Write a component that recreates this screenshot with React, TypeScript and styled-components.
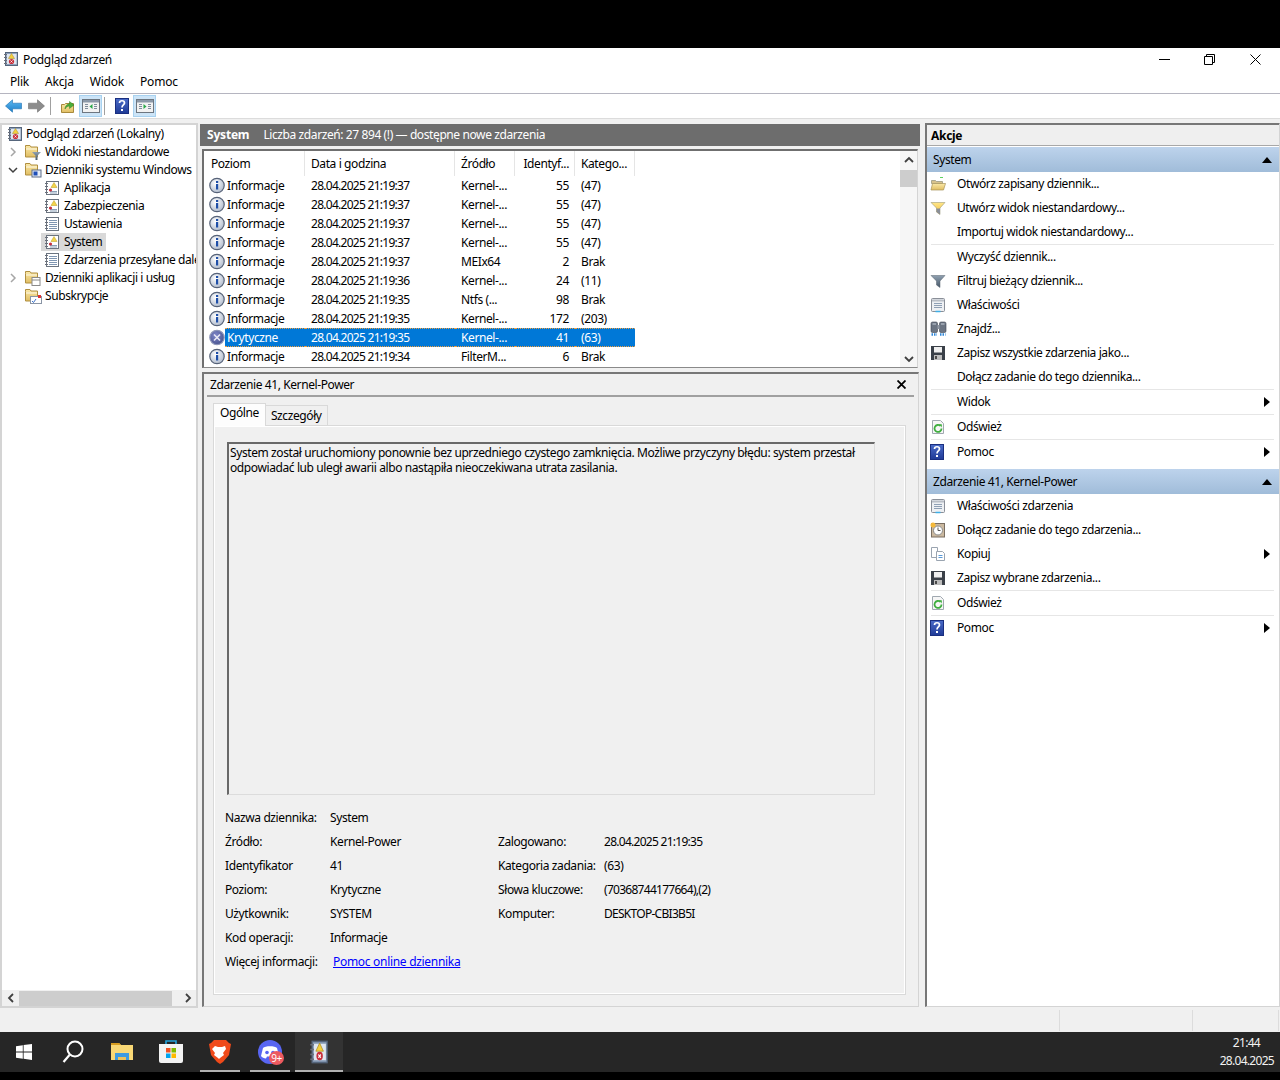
import React from "react";
import styled, { createGlobalStyle } from "styled-components";

const Global = createGlobalStyle`
  html, body { margin: 0; padding: 0; background: #000; }
  body { font-family: "Noto Sans", "Open Sans", "Liberation Sans", sans-serif; font-size: 12px; color: #000; }
  * { box-sizing: border-box; }
`;

const Screen = styled.div`
  width: 1280px; height: 1080px; background: #000; padding: 48px 0 8px;
  display: flex; flex-direction: column; overflow: hidden; letter-spacing: -0.4px;
`;
const TitleBar = styled.div`
  height: 24px; flex: none; background: #fff; display: flex; align-items: center; padding: 0 2px 2px 3px;
`;
const TitleText = styled.span` flex: 1; margin-left: 4px; letter-spacing: -0.35px; `;
const WinBtn = styled.div` width: 45.5px; height: 22px; display: flex; align-items: center; justify-content: center; `;
const MenuBar = styled.div`
  height: 22px; flex: none; background: #fff; border-bottom: 1px solid #b5b5c0; display: flex; align-items: center; padding: 0 0 2px 3px;
`;
const MenuItem = styled.span` padding: 0 7px; margin-right: 2px; letter-spacing: -0.2px; `;
const ToolBar = styled.div`
  height: 25px; flex: none; background: #fff; border-bottom: 1px solid #dcdcdc; display: flex; align-items: center; padding-left: 2px;
`;
const ToolBtn = styled.div<{ $on?: boolean }>`
  width: 23px; height: 22px; display: flex; align-items: center; justify-content: center;
  background: ${p => (p.$on ? "#cce4f7" : "transparent")};
  border: 1px solid ${p => (p.$on ? "#a8d2f0" : "transparent")};
`;
const ToolSep = styled.div` width: 1px; height: 18px; background: #a0a0a0; margin: 0 5px 0 2px; `;
const Main = styled.div`
  flex: 1; min-height: 0; background: #f0f0f0; display: flex; padding-top: 4px;
`;

/* tree */
const TreePane = styled.div`
  width: 198px; flex: none; height: 885px; background: #fff; border: 2px solid #d4d4d4;
  display: flex; flex-direction: column;
`;
const TreeBody = styled.div` flex: 1; overflow: hidden; `;
const TreeRow = styled.div<{ $level: number }>`
  height: 18px; display: flex; align-items: center; white-space: nowrap; padding-left: ${p => [5, 4, 39][p.$level]}px; gap: 4px;
  svg { flex: none; }
`;
const Chevron = styled.div`
  width: 14px; height: 16px; flex: none; display: flex; align-items: center; justify-content: center;
`;
const TreeLabel = styled.span<{ $sel?: boolean }>`
  display: inline-block; line-height: 18px; padding: 0 4px 0 2px; margin-left: -3px;
  background: ${p => (p.$sel ? "#d9d9d9" : "transparent")};
`;
const TreeIconWrap = styled.div<{ $sel?: boolean }>`
  width: 21px; height: 18px; flex: none; display: flex; align-items: center; justify-content: center; margin-right: -1px;
  background: ${p => (p.$sel ? "#d9d9d9" : "transparent")};
`;
const HScroll = styled.div`
  height: 16px; flex: none; display: flex; align-items: center; background: #f0f0f0;
`;
const ScrollArrowBox = styled.div` width: 17px; height: 16px; display: flex; align-items: center; justify-content: center; `;
const HThumb = styled.div` width: 153px; height: 15px; background: #cdcdcd; `;
const HTrack = styled.div` flex: 1; display: flex; `;

/* centre */
const Centre = styled.div`
  width: 720px; flex: none; margin-left: 2px; height: 885px; display: flex; flex-direction: column;
`;
const LogHeader = styled.div`
  height: 22px; flex: none; margin-top: 1px; background: #6d6d6d; color: #fff; display: flex; align-items: center; padding: 0 0 1px 7px; gap: 14px;
`;
const LogName = styled.b` font-weight: 700; letter-spacing: -0.2px; `;
const ListPanel = styled.div`
  height: 219px; flex: none; margin: 3px 2px 0 2px; background: #fff;
  border: 2px solid #6f6f6f; border-right: 1px solid #d4d4d4; border-bottom: 1px solid #8a8a8a;
  display: flex;
`;
const ListBody = styled.div` flex: 1; overflow: hidden; padding-left: 1px; `;
const cols = "100px 150px 60px 60px 60px";
const ListHead = styled.div`
  display: grid; grid-template-columns: ${cols}; width: 430px; height: 25px;
`;
const HeadCell = styled.div<{ $right?: boolean }>`
  padding: 0 ${p => (p.$right ? 5 : 0)}px 0 ${p => (p.$right ? 0 : 6)}px; line-height: 25px; border-right: 1px solid #e5e5e5; white-space: nowrap;
  text-align: ${p => (p.$right ? "right" : "left")};
`;
const Row = styled.div` display: grid; grid-template-columns: ${cols}; width: 430px; height: 19px; `;
const Cell = styled.div<{ $sel?: boolean; $right?: boolean; $tight?: boolean }>`
  line-height: ${p => (p.$sel ? 17 : 19)}px; padding: 0 ${p => (p.$right ? 6 : 0)}px 0 ${p => (p.$right ? 0 : 6)}px; white-space: nowrap; overflow: hidden;
  text-align: ${p => (p.$right ? "right" : "left")};
  letter-spacing: ${p => (p.$tight ? "-0.72px" : "-0.4px")};
  background: ${p => (p.$sel ? "#0078d7" : "transparent")};
  color: ${p => (p.$sel ? "#fff" : "#000")};
  border-top: ${p => (p.$sel ? "1px dotted #f0a040" : "0")};
  border-bottom: ${p => (p.$sel ? "1px dotted #f0a040" : "0")};
`;
const LevelCell = styled.div` display: flex; align-items: center; height: 19px; padding-left: 4px; `;
const LevelText = styled.div<{ $sel?: boolean }>`
  flex: 1; line-height: ${p => (p.$sel ? 17 : 19)}px; padding-left: 2px;
  background: ${p => (p.$sel ? "#0078d7" : "transparent")};
  color: ${p => (p.$sel ? "#fff" : "#000")};
  border-top: ${p => (p.$sel ? "1px dotted #f0a040" : "0")};
  border-bottom: ${p => (p.$sel ? "1px dotted #f0a040" : "0")};
`;
const VScroll = styled.div` width: 17px; flex: none; background: #f6f6f6; display: flex; flex-direction: column; `;
const VArrow = styled.div` height: 17px; display: flex; align-items: center; justify-content: center; flex: none; `;
const VTrack = styled.div` flex: 1; padding-top: 2px; `;
const VThumb = styled.div` height: 17px; background: #cdcdcd; `;

const DetailPane = styled.div`
  flex: 1; margin: 4px 1px 1px 2px; border-top: 2px solid #777; border-left: 2px solid #777;
  border-right: 1px solid #d4d4d4; border-bottom: 1px solid #d4d4d4;
  display: flex; flex-direction: column; padding: 0 4px 0 3px; background: #f0f0f0;
`;
const DetailTitle = styled.div`
  height: 23px; flex: none; display: flex; align-items: center; justify-content: space-between; padding: 0 8px 1px 3px; border-bottom: 2px solid #a0a0a0;
`;
const Tabs = styled.div` display: flex; align-items: flex-end; height: 28px; flex: none; padding-left: 6px; `;
const Tab = styled.div<{ $on?: boolean }>`
  height: ${p => (p.$on ? 23 : 20)}px; padding: 0 ${p => (p.$on ? 6 : 5)}px; line-height: ${p => (p.$on ? 18 : 20)}px;
  background: ${p => (p.$on ? "#fdfdfd" : "#f0f0f0")};
  border: 1px solid #d9d9d9; border-bottom: 0; margin-left: ${p => (p.$on ? 0 : -1)}px;
  margin-bottom: ${p => (p.$on ? -1 : 0)}px; position: relative; z-index: ${p => (p.$on ? 1 : 0)};
`;
const TabPanel = styled.div`
  width: 693px; height: 570px; margin-left: 6px; border: 1px solid #d9d9d9; box-shadow: inset 0 0 0 1px #fff;
  padding: 16px 0 0 13px; display: flex; flex-direction: column; background: #f0f0f0;
`;
const MessageBox = styled.div`
  width: 648px; height: 353px; flex: none; border: 2px solid #696969; border-right: 1px solid #dcdcdc; border-bottom: 1px solid #dcdcdc;
  padding: 1px 1px; line-height: 15px; white-space: nowrap;
`;
const InfoGrid = styled.div`
  display: grid; grid-template-columns: 105px 168px 106px 1fr; grid-auto-rows: 24px; margin: 10px 0 0 -2px;
  align-items: center; white-space: nowrap;
`;
const InfoWide = styled.div` grid-column: 2 / 5; `;
const TightValue = styled.span` letter-spacing: -0.72px; `;
const MoreLink = styled.a` color: #0000ff; text-decoration: underline; margin-left: 3px; letter-spacing: -0.3px; `;

/* actions */
const ActionsPane = styled.div`
  width: 355px; flex: none; margin-left: 5px; height: 884px; background: #fff;
  border-left: 2px solid #777; border-right: 1px solid #d4d4d4; border-bottom: 1px solid #d4d4d4; border-top: 1px solid #777;
  display: flex; flex-direction: column;
`;
const ActionsHead = styled.div`
  height: 22px; flex: none; background: #efefef; border-bottom: 1px solid #a8a8a8; border-top: 1px solid #777; font-weight: 700; padding-left: 4px; line-height: 22px; letter-spacing: -0.3px;
`;
const SectionHead = styled.div<{ $gap?: boolean }>`
  height: 25px; flex: none; background: linear-gradient(#bdd3ec, #a0bcd9); display: flex; align-items: center; justify-content: space-between; padding: 0 7px 0 6px;
  margin-top: ${p => (p.$gap ? 5 : 1)}px;
`;
const ActionRow = styled.div`
  height: 24px; flex: none; display: flex; align-items: center; padding: 0 9px 1px 3px; white-space: nowrap;
`;
const ActionIcon = styled.div` width: 27px; flex: none; height: 18px; display: flex; align-items: center; justify-content: flex-start; `;
const ActionLabel = styled.span` flex: 1; `;
const ActionSep = styled.div` height: 1px; flex: none; margin-left: 4px; margin-right: 5px; background: #e6e6e6; `;

/* status & taskbar */
const StatusBar = styled.div`
  height: 24px; flex: none; background: #f0f0f0; display: flex; justify-content: flex-end; padding: 2px 0 1px;
`;
const StatusCell = styled.div<{ $w: number }>` width: ${p => p.$w}px; border-left: 1px solid #dcdcdc; `;
const TaskBar = styled.div`
  height: 40px; flex: none; background: #262626; display: flex; align-items: center; color: #fff;
`;
const TaskBtn = styled.div<{ $w: number; $run?: boolean; $on?: boolean }>`
  width: ${p => p.$w}px; height: 40px; display: flex; align-items: center; justify-content: center; position: relative; flex: none;
  background: ${p => (p.$on ? "#333" : "transparent")};
  &::after {
    content: ""; position: absolute; bottom: 0; height: 2px; left: ${p => (p.$on ? 0 : 5)}px; right: ${p => (p.$on ? 0 : 5)}px;
    background: ${p => (p.$run ? "#b0b0b0" : "transparent")};
  }
`;
const Spacer = styled.div` flex: 1; `;
const Clock = styled.div`
  margin-right: 6px; line-height: 18px; color: #f2f2f2; display: flex; flex-direction: column; align-items: flex-end; padding-bottom: 1px; letter-spacing: -0.7px;
`;
const ClockTime = styled.span` margin-right: 14px; `;
const Badge = styled.span`
  position: absolute; left: 24px; top: 19px; width: 15px; height: 14px; border-radius: 50%; background: #ed5a5f; color: #fff;
  font-size: 10px; line-height: 14px; text-align: center; letter-spacing: -0.5px;
`;

/* icons */
const GradDefs = () => (
  <svg width="0" height="0" style={{ position: "absolute" }} aria-hidden>
    <defs>
      <radialGradient id="gInfo" cx="0.4" cy="0.35" r="0.7"><stop offset="0" stopColor="#fff" /><stop offset="1" stopColor="#aeb9cb" /></radialGradient>
      <radialGradient id="gCrit" cx="0.4" cy="0.35" r="0.7"><stop offset="0" stopColor="#7f86c8" /><stop offset="1" stopColor="#47538f" /></radialGradient>
      <linearGradient id="gFolder" x1="0" y1="0" x2="0" y2="1"><stop offset="0" stopColor="#fbe9a8" /><stop offset="1" stopColor="#e0bd62" /></linearGradient>
      <linearGradient id="gBlueArrow" x1="0" y1="0" x2="0" y2="1"><stop offset="0" stopColor="#5db9f2" /><stop offset="1" stopColor="#1d7fc9" /></linearGradient>
      <linearGradient id="gHelp" x1="0" y1="0" x2="0" y2="1"><stop offset="0" stopColor="#4a6bc8" /><stop offset="1" stopColor="#1f3a96" /></linearGradient>
      <linearGradient id="gGrayFun" x1="0" y1="0" x2="0" y2="1"><stop offset="0" stopColor="#8fa0b0" /><stop offset="1" stopColor="#48596a" /></linearGradient>
      <linearGradient id="gTb" x1="0" y1="0" x2="0" y2="1"><stop offset="0" stopColor="#ffe68a" /><stop offset="1" stopColor="#f2bd3a" /></linearGradient>
    </defs>
  </svg>
);

const Rings = ({ x = 1 }: { x?: number }) => (
  <g stroke="#6a6f7a" strokeWidth="1">
    {[3, 6, 9, 12].map(y => <line key={y} x1={x} x2={x + 3} y1={y + 0.5} y2={y + 0.5} />)}
  </g>
);
const ViewerIcon = ({ w = 16, h = 16 }: { w?: number; h?: number }) => (
  <svg width={w} height={h} viewBox="0 0 16 16" preserveAspectRatio="none">
    <rect x="2.5" y="1.5" width="12" height="13" fill="#8fa3bd" stroke="#56667c" />
    <rect x="4" y="3" width="9.5" height="10" fill="#dfe6f0" />
    <Rings />
    <path d="M8.5 2.5l3 5h-6z" fill="#f4cf3e" stroke="#a98a20" strokeWidth=".5" />
    <circle cx="8.5" cy="10.5" r="2.6" fill="#c8303c" />
    <path d="M7.5 9.5l2 2m0-2l-2 2" stroke="#fff" strokeWidth=".8" />
  </svg>
);
const LogAlertIcon = () => (
  <svg width="16" height="16" viewBox="0 0 16 16">
    <rect x="2.5" y="1.5" width="12" height="13" fill="#fff" stroke="#6b7480" />
    <Rings />
    <path d="M6 11.5h7M6 13h7" stroke="#8aa0b8" />
    <path d="M10 2.5l3 5H7z" fill="#f4d54a" stroke="#b99a20" strokeWidth=".5" />
    <circle cx="6.5" cy="10" r="1.6" fill="#c8303c" />
  </svg>
);
const LogPlainIcon = () => (
  <svg width="16" height="16" viewBox="0 0 16 16">
    <rect x="2.5" y="1.5" width="12" height="13" fill="#fff" stroke="#6b7480" />
    <Rings />
    <path d="M5 4.5h8M5 6.5h8M5 8.5h8M5 10.5h8M5 12.5h8" stroke="#7f96b2" />
  </svg>
);
const Folder = ({ overlay }: { overlay?: "filter" | "win" | "doc" | "sub" }) => (
  <svg width="18" height="16" viewBox="0 0 18 16">
    <path d="M1.5 3.5v-2h4.5l1 1.5h6.5v10h-12z" fill="url(#gFolder)" stroke="#b08f40" />
    <rect x="2" y="4.5" width="11" height="1" fill="#fff" opacity=".8" />
    {overlay === "filter" && <path d="M8 8h9l-3.5 3.5V16h-2v-4.500z" fill="url(#gGrayFun)" />}
    {overlay === "win" && <g><rect x="8" y="8" width="9" height="7" fill="#e8eef6" stroke="#5d6d88" /><rect x="9.500" y="9.500" width="4" height="4" fill="#1f4fb8" /></g>}
    {overlay === "doc" && <g><rect x="8" y="7.500" width="8" height="8" fill="#fff" stroke="#8a8a8a" /><path d="M8 10h8" stroke="#8a8a8a" /></g>}
    {overlay === "sub" && <g><rect x="6.500" y="8.500" width="11" height="7" fill="#fff" stroke="#8a95a5" /><path d="M8 13l1.500 1.500L12 11" stroke="#3a70c8" fill="none" /><rect x="14" y="7" width="3" height="3" fill="#d33" /></g>}
  </svg>
);
const ChevronRight = () => (
  <svg width="8" height="10" viewBox="0 0 8 10"><path d="M2 1l4 4-4 4" fill="none" stroke="#a6a6a6" strokeWidth="1.500" /></svg>
);
const ChevronDown = () => (
  <svg width="10" height="8" viewBox="0 0 10 8"><path d="M1 2l4 4 4-4" fill="none" stroke="#404040" strokeWidth="1.500" /></svg>
);
const InfoIcon = () => (
  <svg width="16" height="17" viewBox="0 0 16 17" style={{ flex: "none" }}>
    <circle cx="8" cy="8.500" r="7.200" fill="url(#gInfo)" stroke="#566278" strokeWidth="1.200" />
    <rect x="7" y="7" width="2.200" height="5.500" fill="#1f4fa8" />
    <rect x="7" y="4" width="2.200" height="2" fill="#1f4fa8" />
  </svg>
);
const CritIcon = () => (
  <svg width="16" height="17" viewBox="0 0 16 17" style={{ flex: "none" }}>
    <circle cx="8" cy="8.500" r="7.200" fill="url(#gCrit)" stroke="#8e96b8" strokeWidth="1.200" />
    <path d="M5 5.500l6 6m0-6l-6 6" stroke="#e8e8f4" strokeWidth="1.600" />
  </svg>
);
const NavArrow = ({ dir }: { dir: "l" | "r" }) => (
  <svg width="17" height="14" viewBox="0 0 17 14">
    {dir === "l"
      ? <path d="M.5 7L7.500.8v3.400H16.500v5.600H7.500v3.400z" fill="url(#gBlueArrow)" stroke="#1b6fb0" strokeWidth=".6" />
      : <path d="M16.500 7L9.500.8v3.400H.5v5.600h9v3.400z" fill="#8c8c8c" stroke="#6e6e6e" strokeWidth=".6" />}
  </svg>
);
const UpFolder = () => (
  <svg width="16" height="16" viewBox="0 0 16 16">
    <path d="M1.500 6.500h3l1-1h8v9h-12z" fill="url(#gFolder)" stroke="#a88a3c" />
    <path d="M5 11c0-3 2-5 4.500-5V3.500L14 7l-4.500 3.500V8C7.500 8 6 9 5 11z" fill="#4caf3a" stroke="#2f7f25" strokeWidth=".5" />
  </svg>
);
const PaneIcon = ({ dir }: { dir: "l" | "r" }) => (
  <svg width="18" height="16" viewBox="0 0 18 16">
    <rect x=".5" y="1.500" width="17" height="13" fill="#f2f2f2" stroke="#6d7680" />
    <rect x="1" y="2" width="16" height="2.500" fill="#8b98a8" />
    <path d="M3 6.500h3M3 8.500h3M3 10.500h3M12 6.500h3M12 8.500h3M12 10.500h3" stroke="#7f8c9c" />
    {dir === "l" ? <path d="M10.500 6l-3 2.500 3 2.500z" fill="#2aa84a" /> : <path d="M7.500 6l3 2.500-3 2.500z" fill="#2aa84a" />}
  </svg>
);
const HelpIcon = () => (
  <svg width="14" height="16" viewBox="0 0 14 16">
    <rect x=".5" y=".5" width="13" height="15" fill="url(#gHelp)" stroke="#1a2f80" />
    <path d="M4.500 5c0-3 5-3 5 0 0 2-2.500 2-2.500 4.500" fill="none" stroke="#fff" strokeWidth="1.700" />
    <rect x="6" y="11" width="2" height="2" fill="#fff" />
  </svg>
);
const OpenFolder = () => (
  <svg width="16" height="16" viewBox="0 0 16 16">
    <path d="M1.500 4.500h4l1 1h6v2h-11z" fill="#d7c28c" stroke="#8f8f7a" strokeWidth=".7" />
    <path d="M1 14l1.500-6.500h13L13.500 14z" fill="url(#gFolder)" stroke="#a8935a" strokeWidth=".7" />
    <path d="M10 1.500h3" stroke="#5fd35f" />
  </svg>
);
const Funnel = ({ color }: { color: "y" | "g" }) => (
  <svg width="16" height="16" viewBox="0 0 16 16">
    <path d="M1 2.500h14L10 8v6.500L6.500 12V8z" fill={color === "y" ? "url(#gTb)" : "url(#gGrayFun)"} stroke={color === "y" ? "#8a8a6a" : "#55606c"} strokeWidth=".5" />
    {color === "y" && <path d="M6.500 8.500h3.500v6l-3.500-2.500z" fill="#8a8f98" />}
  </svg>
);
const PropsIcon = () => (
  <svg width="16" height="16" viewBox="0 0 16 16">
    <rect x="1.500" y="1.500" width="13" height="13" rx="1" fill="#eef0f3" stroke="#8a8f98" />
    <path d="M2 3.500h12" stroke="#b9bec6" strokeWidth="2" />
    <path d="M4 6.500h8M4 8.500h8M4 10.500h8" stroke="#8fa0b5" />
    <path d="M5.500 14.500h5" stroke="#3fb0e8" strokeWidth="1.500" />
  </svg>
);
const Binoculars = () => (
  <svg width="17" height="16" viewBox="0 0 17 16">
    <rect x="1" y="1" width="6.500" height="10.500" rx="1.500" fill="#6b7482" stroke="#3e4550" strokeWidth=".6" />
    <rect x="9.500" y="1" width="6.500" height="10.500" rx="1.500" fill="#6b7482" stroke="#3e4550" strokeWidth=".6" />
    <rect x="7.500" y="4" width="2" height="4" fill="#8f98a5" />
    <path d="M1.500 13.500h5.500M10 13.500h5.500" stroke="#2f86d8" strokeWidth="2.500" strokeDasharray="1.500 1" />
    <path d="M2.500 3h3.500M11 3h3.500" stroke="#c7ced8" />
  </svg>
);
const Floppy = () => (
  <svg width="16" height="16" viewBox="0 0 16 16">
    <path d="M1 1h14v14H1z" fill="#3a4048" />
    <rect x="4" y="2" width="8" height="5.500" fill="#efefef" />
    <rect x="4" y="10" width="8" height="5" fill="#bdbdbd" />
    <rect x="5" y="11" width="2" height="3" fill="#4a4a4a" />
  </svg>
);
const RefreshIcon = () => (
  <svg width="16" height="16" viewBox="0 0 16 16">
    <path d="M2.500 1.500h8l3 3v10h-11z" fill="#f6f6f6" stroke="#a0a8b0" />
    <path d="M11.500 9.500a3.500 3.500 0 1 1-1.200-2.700" fill="none" stroke="#3fae3f" strokeWidth="1.800" />
    <path d="M9 5l3 .5-.5 3z" fill="#3fae3f" />
  </svg>
);
const TaskIcon = () => (
  <svg width="16" height="16" viewBox="0 0 16 16">
    <rect x="1.500" y="1.500" width="13" height="13.500" fill="#cbb9a0" stroke="#7a6f62" />
    <circle cx="8" cy="8.500" r="4.500" fill="#fff" stroke="#8a8a8a" />
    <path d="M8 5.500v3h2.500" fill="none" stroke="#555" />
    <circle cx="3" cy="3" r="2.500" fill="#f5b93a" />
  </svg>
);
const CopyIcon = () => (
  <svg width="16" height="16" viewBox="0 0 16 16">
    <path d="M1.500 1.500h6v10h-6z" fill="#fff" stroke="#9aa4b0" />
    <path d="M6.500 5.500h6l2 2v7h-8z" fill="#fff" stroke="#9aa4b0" />
    <path d="M8.500 9.500h4M8.500 11.500h4" stroke="#5a9ad8" />
  </svg>
);
const Tri = ({ dir }: { dir: "r" | "u" }) => (
  dir === "r"
    ? <svg width="6" height="10" viewBox="0 0 6 10"><path d="M0 0l6 5-6 5z" fill="#000" /></svg>
    : <svg width="10" height="6" viewBox="0 0 10 6"><path d="M5 0l5 6H0z" fill="#000" /></svg>
);
const ScrollTri = ({ dir }: { dir: "u" | "d" | "l" | "r" }) => {
  const d = { u: "M1 7l4-4 4 4", d: "M1 3l4 4 4-4", l: "M7 1L3 5l4 4", r: "M3 1l4 4-4 4" }[dir];
  return <svg width="10" height="10" viewBox="0 0 10 10"><path d={d} fill="none" stroke="#404040" strokeWidth="1.800" /></svg>;
};

/* data */
type Ev = [string, string, string, string, string];
const events: Ev[] = [
  ["Informacje", "28.04.2025 21:19:37", "Kernel-...", "55", "(47)"],
  ["Informacje", "28.04.2025 21:19:37", "Kernel-...", "55", "(47)"],
  ["Informacje", "28.04.2025 21:19:37", "Kernel-...", "55", "(47)"],
  ["Informacje", "28.04.2025 21:19:37", "Kernel-...", "55", "(47)"],
  ["Informacje", "28.04.2025 21:19:37", "MEIx64", "2", "Brak"],
  ["Informacje", "28.04.2025 21:19:36", "Kernel-...", "24", "(11)"],
  ["Informacje", "28.04.2025 21:19:35", "Ntfs (...", "98", "Brak"],
  ["Informacje", "28.04.2025 21:19:35", "Kernel-...", "172", "(203)"],
  ["Krytyczne", "28.04.2025 21:19:35", "Kernel-...", "41", "(63)"],
  ["Informacje", "28.04.2025 21:19:34", "FilterM...", "6", "Brak"],
];

type Act = { label?: string; icon?: React.ReactNode; more?: boolean };
const sysActions: Act[] = [
  { label: "Otwórz zapisany dziennik...", icon: <OpenFolder /> },
  { label: "Utwórz widok niestandardowy...", icon: <Funnel color="y" /> },
  { label: "Importuj widok niestandardowy..." },
  {},
  { label: "Wyczyść dziennik..." },
  { label: "Filtruj bieżący dziennik...", icon: <Funnel color="g" /> },
  { label: "Właściwości", icon: <PropsIcon /> },
  { label: "Znajdź...", icon: <Binoculars /> },
  { label: "Zapisz wszystkie zdarzenia jako...", icon: <Floppy /> },
  { label: "Dołącz zadanie do tego dziennika..." },
  {},
  { label: "Widok", more: true },
  {},
  { label: "Odśwież", icon: <RefreshIcon /> },
  {},
  { label: "Pomoc", icon: <HelpIcon />, more: true },
];
const evtActions: Act[] = [
  { label: "Właściwości zdarzenia", icon: <PropsIcon /> },
  { label: "Dołącz zadanie do tego zdarzenia...", icon: <TaskIcon /> },
  { label: "Kopiuj", icon: <CopyIcon />, more: true },
  { label: "Zapisz wybrane zdarzenia...", icon: <Floppy /> },
  {},
  { label: "Odśwież", icon: <RefreshIcon /> },
  {},
  { label: "Pomoc", icon: <HelpIcon />, more: true },
];

const Actions = ({ items }: { items: Act[] }) => (
  <>
    {items.map((a, i) =>
      a.label ? (
        <ActionRow key={i}>
          <ActionIcon>{a.icon}</ActionIcon>
          <ActionLabel>{a.label}</ActionLabel>
          {a.more && <Tri dir="r" />}
        </ActionRow>
      ) : (
        <ActionSep key={i} />
      )
    )}
  </>
);

export default function App() {
  return (
    <Screen>
      <Global />
      <GradDefs />
      <TitleBar>
        <ViewerIcon />
        <TitleText>Podgląd zdarzeń</TitleText>
        <WinBtn><svg width="11" height="11" viewBox="0 0 11 11"><path d="M0 5.500h11" stroke="#000" /></svg></WinBtn>
        <WinBtn><svg width="11" height="11" viewBox="0 0 11 11"><path d="M.5 2.500h8v8h-8zM2.500 2.500v-2h8v8h-2" fill="none" stroke="#000" /></svg></WinBtn>
        <WinBtn><svg width="11" height="11" viewBox="0 0 11 11"><path d="M.5.5l10 10m0-10l-10 10" stroke="#000" /></svg></WinBtn>
      </TitleBar>
      <MenuBar>
        <MenuItem>Plik</MenuItem>
        <MenuItem>Akcja</MenuItem>
        <MenuItem>Widok</MenuItem>
        <MenuItem>Pomoc</MenuItem>
      </MenuBar>
      <ToolBar>
        <ToolBtn><NavArrow dir="l" /></ToolBtn>
        <ToolBtn><NavArrow dir="r" /></ToolBtn>
        <ToolSep />
        <ToolBtn><UpFolder /></ToolBtn>
        <ToolBtn $on><PaneIcon dir="l" /></ToolBtn>
        <ToolSep />
        <ToolBtn><HelpIcon /></ToolBtn>
        <ToolBtn $on><PaneIcon dir="r" /></ToolBtn>
      </ToolBar>
      <Main>
        <TreePane>
          <TreeBody>
            <TreeRow $level={0}><ViewerIcon /><TreeLabel>Podgląd zdarzeń (Lokalny)</TreeLabel></TreeRow>
            <TreeRow $level={1}><Chevron><ChevronRight /></Chevron><Folder overlay="filter" /><TreeLabel>Widoki niestandardowe</TreeLabel></TreeRow>
            <TreeRow $level={1}><Chevron><ChevronDown /></Chevron><Folder overlay="win" /><TreeLabel>Dzienniki systemu Windows</TreeLabel></TreeRow>
            <TreeRow $level={2}><TreeIconWrap><LogAlertIcon /></TreeIconWrap><TreeLabel>Aplikacja</TreeLabel></TreeRow>
            <TreeRow $level={2}><TreeIconWrap><LogAlertIcon /></TreeIconWrap><TreeLabel>Zabezpieczenia</TreeLabel></TreeRow>
            <TreeRow $level={2}><TreeIconWrap><LogPlainIcon /></TreeIconWrap><TreeLabel>Ustawienia</TreeLabel></TreeRow>
            <TreeRow $level={2}><TreeIconWrap $sel><LogAlertIcon /></TreeIconWrap><TreeLabel $sel>System</TreeLabel></TreeRow>
            <TreeRow $level={2}><TreeIconWrap><LogPlainIcon /></TreeIconWrap><TreeLabel>Zdarzenia przesyłane dalej</TreeLabel></TreeRow>
            <TreeRow $level={1}><Chevron><ChevronRight /></Chevron><Folder overlay="doc" /><TreeLabel>Dzienniki aplikacji i usług</TreeLabel></TreeRow>
            <TreeRow $level={1}><Chevron /><Folder overlay="sub" /><TreeLabel>Subskrypcje</TreeLabel></TreeRow>
          </TreeBody>
          <HScroll>
            <ScrollArrowBox><ScrollTri dir="l" /></ScrollArrowBox>
            <HTrack><HThumb /></HTrack>
            <ScrollArrowBox><ScrollTri dir="r" /></ScrollArrowBox>
          </HScroll>
        </TreePane>
        <Centre>
          <LogHeader>
            <LogName>System</LogName>
            <span>Liczba zdarzeń: 27 894 (!) — dostępne nowe zdarzenia</span>
          </LogHeader>
          <ListPanel>
            <ListBody>
              <ListHead>
                <HeadCell>Poziom</HeadCell>
                <HeadCell>Data i godzina</HeadCell>
                <HeadCell>Źródło</HeadCell>
                <HeadCell $right>Identyf...</HeadCell>
                <HeadCell>Katego...</HeadCell>
              </ListHead>
              {events.map((e, i) => {
                const sel = e[0] === "Krytyczne";
                return (
                  <Row key={i}>
                    <LevelCell>
                      {sel ? <CritIcon /> : <InfoIcon />}
                      <LevelText $sel={sel}>{e[0]}</LevelText>
                    </LevelCell>
                    <Cell $sel={sel} $tight>{e[1]}</Cell>
                    <Cell $sel={sel}>{e[2]}</Cell>
                    <Cell $sel={sel} $right>{e[3]}</Cell>
                    <Cell $sel={sel}>{e[4]}</Cell>
                  </Row>
                );
              })}
            </ListBody>
            <VScroll>
              <VArrow><ScrollTri dir="u" /></VArrow>
              <VTrack><VThumb /></VTrack>
              <VArrow><ScrollTri dir="d" /></VArrow>
            </VScroll>
          </ListPanel>
          <DetailPane>
            <DetailTitle>
              <span>Zdarzenie 41, Kernel-Power</span>
              <svg width="9" height="9" viewBox="0 0 9 9"><path d="M.5.5l8 8m0-8l-8 8" stroke="#000" strokeWidth="1.800" /></svg>
            </DetailTitle>
            <Tabs>
              <Tab $on>Ogólne</Tab>
              <Tab>Szczegóły</Tab>
            </Tabs>
            <TabPanel>
              <MessageBox>
                System został uruchomiony ponownie bez uprzedniego czystego zamknięcia. Możliwe przyczyny błędu: system przestał<br />
                odpowiadać lub uległ awarii albo nastąpiła nieoczekiwana utrata zasilania.
              </MessageBox>
              <InfoGrid>
                <span>Nazwa dziennika:</span><InfoWide>System</InfoWide>
                <span>Źródło:</span><span>Kernel-Power</span><span>Zalogowano:</span><TightValue>28.04.2025 21:19:35</TightValue>
                <span>Identyfikator</span><span>41</span><span>Kategoria zadania:</span><span>(63)</span>
                <span>Poziom:</span><span>Krytyczne</span><span>Słowa kluczowe:</span><TightValue>(70368744177664),(2)</TightValue>
                <span>Użytkownik:</span><span>SYSTEM</span><span>Komputer:</span><TightValue>DESKTOP-CBI3B5I</TightValue>
                <span>Kod operacji:</span><InfoWide>Informacje</InfoWide>
                <span>Więcej informacji:</span><InfoWide><MoreLink href="#">Pomoc online dziennika</MoreLink></InfoWide>
              </InfoGrid>
            </TabPanel>
          </DetailPane>
        </Centre>
        <ActionsPane>
          <ActionsHead>Akcje</ActionsHead>
          <SectionHead><span>System</span><Tri dir="u" /></SectionHead>
          <Actions items={sysActions} />
          <SectionHead $gap><span>Zdarzenie 41, Kernel-Power</span><Tri dir="u" /></SectionHead>
          <Actions items={evtActions} />
        </ActionsPane>
      </Main>
      <StatusBar>
        <StatusCell $w={133} />
        <StatusCell $w={86} />
        <StatusCell $w={2} />
      </StatusBar>
      <TaskBar>
        <TaskBtn $w={48}>
          <svg width="16" height="16" viewBox="0 0 16 16"><path d="M0 2.200l6.800-1v6.400H0zM7.600 1.100L16 0v7.600H7.600zM0 8.400h6.800v6.400L0 13.800zM7.600 8.400H16V16l-8.400-1.200z" fill="#fff" /></svg>
        </TaskBtn>
        <TaskBtn $w={49}>
          <svg width="22" height="24" viewBox="0 0 22 24"><circle cx="13" cy="9" r="7.500" fill="none" stroke="#fff" strokeWidth="2" /><path d="M7.500 15L1.500 22" stroke="#fff" strokeWidth="2.200" /></svg>
        </TaskBtn>
        <TaskBtn $w={49}>
          <svg width="22" height="20" viewBox="0 0 22 20"><path d="M0 1h8l2 2h12v15H0z" fill="#f8d775" /><path d="M0 1h8l2 2H0z" fill="#d69b1f" /><path d="M4 18v-7h14v7h-3v-3H7v3z" fill="#3d9ae0" /><rect x="7" y="15" width="8" height="3" fill="#eec25a" /></svg>
        </TaskBtn>
        <TaskBtn $w={49}>
          <svg width="24" height="24" viewBox="0 0 24 24"><path d="M7 5V1h10v4" fill="none" stroke="#25a4dd" strokeWidth="1.600" /><path d="M0 4h24v17a2 2 0 0 1-2 2H2a2 2 0 0 1-2-2z" fill="#f3f3f3" /><rect x="7" y="8" width="4.500" height="4.500" fill="#f25022" /><rect x="12.500" y="8" width="4.500" height="4.500" fill="#7fba00" /><rect x="7" y="13.500" width="4.500" height="4.500" fill="#00a4ef" /><rect x="12.500" y="13.500" width="4.500" height="4.500" fill="#ffb900" /></svg>
        </TaskBtn>
        <TaskBtn $w={50} $run>
          <svg width="22" height="24" viewBox="0 0 22 24"><path d="M5 0h12l3 3 2 1-2 11-6 7-3 2-3-2-6-7L0 4l2-1z" fill="#f04a1a" /><path d="M6 6l3 1h4l3-1 1 3-3 4 1 2-4 3-1 1-1-1-4-3 1-2-3-4z" fill="#fff" /></svg>
        </TaskBtn>
        <TaskBtn $w={50} $run>
          <svg width="24" height="24" viewBox="0 0 24 24"><circle cx="12" cy="12" r="12" fill="#5865f2" /><path d="M5 8c2-2.500 12-2.500 14 0l2 8c-1 1.500-3 2.500-5 2.500l-1-2H9l-1 2c-2 0-4-1-5-2.500z" fill="#fff" /><circle cx="9" cy="12.500" r="1.800" fill="#5865f2" /><circle cx="15" cy="12.500" r="1.800" fill="#5865f2" /></svg>
          <Badge>9+</Badge>
        </TaskBtn>
        <TaskBtn $w={48} $run $on><ViewerIcon w={20} h={26} /></TaskBtn>
        <Spacer />
        <Clock>
          <ClockTime>21:44</ClockTime>
          <span>28.04.2025</span>
        </Clock>
      </TaskBar>
    </Screen>
  );
}
